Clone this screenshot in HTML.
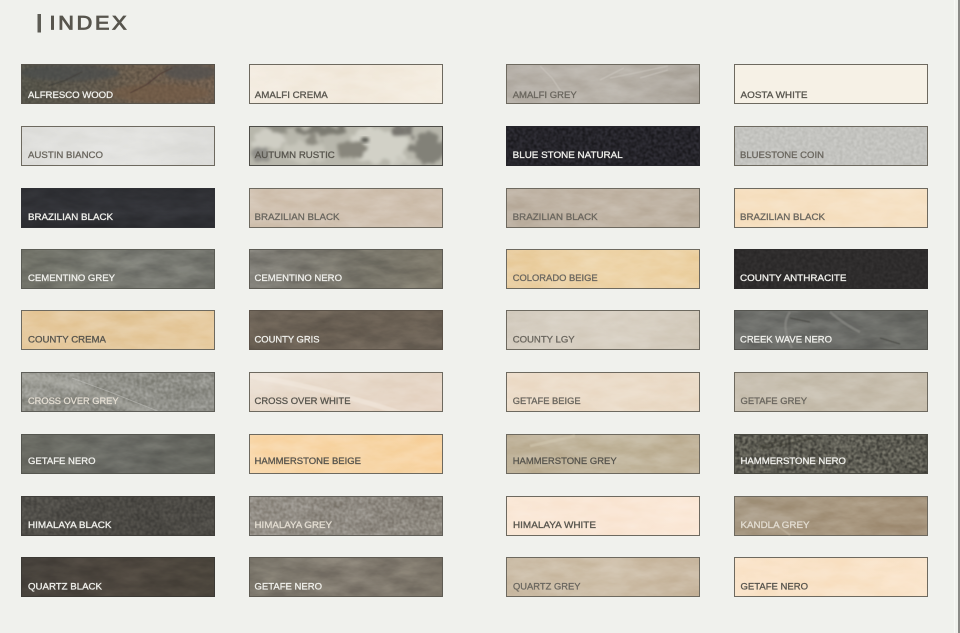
<!DOCTYPE html>
<html lang="en">
<head>
<meta charset="utf-8">
<title>Index</title>
<style>
html,body{margin:0;padding:0;width:960px;height:633px;overflow:hidden;background:#f0f1ed}
#p{position:relative;width:960px;height:633px;overflow:hidden;background:#f0f1ed}
.s{position:absolute;width:194px;height:40px;box-sizing:border-box;border:1px solid #6d695f}
.d{border-color:#4d4c47}
.c1{left:21px}.c2{left:249px}.c3{left:506px}.c4{left:734px}
.r1{top:64px}.r2{top:126px}.r3{top:188px}.r4{top:249px}.r5{top:310px}.r6{top:372px}.r7{top:434px}.r8{top:496px}.r9{top:557px}
svg{position:absolute;left:0;top:0}
.ov{mix-blend-mode:overlay}
text{font-family:"Liberation Sans",Arial,sans-serif;font-size:9.6px;stroke-width:.3px}
.k{fill:#58554e;stroke:#58554e}.g{fill:#6b675f;stroke:#6b675f}.w{fill:#f0f0ec;stroke:#f0f0ec}.m{fill:#e2dcd1;stroke:#e2dcd1}
#edge1{position:absolute;left:954px;top:0;width:1px;height:633px;background:#f7f8f5}
#edge2{position:absolute;left:958px;top:0;width:2px;height:633px;background:#8a8a87}
</style>
</head>
<body>
<div id="p">
<div class="s c1 r1 d" style="background:linear-gradient(90deg,#545349 0%,#5d574c 30%,#6a5c4c 60%,#6c5c4d 85%,#705f4f 100%);border-color:#57534b"></div>
<div class="s c2 r1" style="background:linear-gradient(100deg,#f4ede2,#f1e8da 50%,#f5eee2)"></div>
<div class="s c3 r1" style="background:linear-gradient(100deg,#b5afa7,#b9b3aa 50%,#aea89f)"></div>
<div class="s c4 r1" style="background:#f6f1e6"></div>

<div class="s c1 r2" style="background:linear-gradient(100deg,#dededb,#e3e3e0 60%,#dbdbd8)"></div>
<div class="s c2 r2 d" style="background:#b8b7ac"></div>
<div class="s c3 r2 d" style="background:#25242a;border-color:#25242a"></div>
<div class="s c4 r2" style="background:#c4c4c0"></div>

<div class="s c1 r3 d" style="background:linear-gradient(180deg,#2c2d31,#34353a 60%,#2a2b2f);border-color:#2f3034"></div>
<div class="s c2 r3" style="background:linear-gradient(90deg,#d2c3b2,#cfc0af)"></div>
<div class="s c3 r3" style="background:linear-gradient(90deg,#bdb1a2,#c3b7a8 55%,#bbaf9f)"></div>
<div class="s c4 r3" style="background:linear-gradient(90deg,#f6dfbf,#f6e2c6)"></div>

<div class="s c1 r4 d" style="background:linear-gradient(90deg,#727369,#7a7b74 60%,#72736c);border-color:#5b5c55"></div>
<div class="s c2 r4 d" style="background:linear-gradient(90deg,#7f7d76,#777469 60%,#7f7a6c);border-color:#5d5b54"></div>
<div class="s c3 r4" style="background:linear-gradient(100deg,#e9cd9f,#eed5aa 50%,#ecd1a3)"></div>
<div class="s c4 r4 d" style="background:#2e2c2c;border-color:#2e2c2c"></div>

<div class="s c1 r5" style="background:linear-gradient(110deg,#e7cba0,#e4c89c 50%,#e8cda3)"></div>
<div class="s c2 r5 d" style="background:linear-gradient(170deg,#6e6458,#685e52 50%,#71675b);border-color:#5b5248"></div>
<div class="s c3 r5" style="background:linear-gradient(115deg,#d3cbbe,#d9d1c4 50%,#d2c9ba)"></div>
<div class="s c4 r5 d" style="background:linear-gradient(90deg,#6f706c,#6b6c68 50%,#696a65);border-color:#54544f"></div>

<div class="s c1 r6 d" style="background:linear-gradient(165deg,#a0a099 0%,#8f8f88 45%,#90908a 100%);border-color:#5e5e58"></div>
<div class="s c2 r6" style="background:linear-gradient(165deg,#efe5da,#e6d7c7 50%,#e6d4c4)"></div>
<div class="s c3 r6" style="background:linear-gradient(110deg,#edddca,#ebdcc9 60%,#eadac6)"></div>
<div class="s c4 r6" style="background:linear-gradient(110deg,#c9c1b2,#c7beae 60%,#c9c0b0)"></div>

<div class="s c1 r7 d" style="background:linear-gradient(100deg,#6a6b63,#6b6c66 50%,#65665f);border-color:#55564f"></div>
<div class="s c2 r7" style="background:linear-gradient(100deg,#f9d8ab,#f7d5a5 60%,#f8d4a3)"></div>
<div class="s c3 r7" style="background:linear-gradient(100deg,#bfb299,#c2b69d 60%,#bfb197)"></div>
<div class="s c4 r7 d" style="background:linear-gradient(100deg,#5a5950,#5d5c53 60%,#5a5950);border-color:#4a4a42"></div>

<div class="s c1 r8 d" style="background:linear-gradient(90deg,#504e49,#4a4843 60%,#4c4a45);border-color:#403e3a"></div>
<div class="s c2 r8 d" style="background:linear-gradient(90deg,#948f87,#8f8a82 60%,#89847b);border-color:#62605a"></div>
<div class="s c3 r8" style="background:linear-gradient(100deg,#fae8d7,#fae6d4 60%,#fbe9d8)"></div>
<div class="s c4 r8" style="background:linear-gradient(100deg,#a89a85,#a8977f 60%,#a4927a)"></div>

<div class="s c1 r9 d" style="background:linear-gradient(90deg,#46413b,#4d463e 50%,#4b453c);border-color:#3c3a35"></div>
<div class="s c2 r9 d" style="background:linear-gradient(110deg,#7b766b,#827b70 50%,#7b7468);border-color:#5e5b53"></div>
<div class="s c3 r9" style="background:linear-gradient(110deg,#cbbca6,#cfc0aa 50%,#c9b8a1)"></div>
<div class="s c4 r9" style="background:linear-gradient(110deg,#fae4ca,#f9e2c6 50%,#fae5cc)"></div>

<svg width="960" height="633" viewBox="0 0 960 633" class="ov" xmlns="http://www.w3.org/2000/svg">
<defs>
<filter id="n" x="0" y="0" width="100%" height="100%" color-interpolation-filters="sRGB">
<feTurbulence type="fractalNoise" baseFrequency=".035 .09" numOctaves="4" seed="7"/>
<feColorMatrix type="matrix" values="1.6 0 0 0 -.3 1.6 0 0 0 -.3 1.6 0 0 0 -.3 0 0 0 0 1"/>
<feComposite in2="SourceGraphic" operator="in"/>
</filter>
<filter id="f" x="0" y="0" width="100%" height="100%" color-interpolation-filters="sRGB">
<feTurbulence type="fractalNoise" baseFrequency=".35" numOctaves="3" seed="3"/>
<feColorMatrix type="matrix" values="2 0 0 0 -.5 2 0 0 0 -.5 2 0 0 0 -.5 0 0 0 0 1"/>
<feGaussianBlur stdDeviation=".5"/>
<feComposite in2="SourceGraphic" operator="in"/>
</filter>
</defs>
<g filter="url(#n)" opacity=".12" fill="#fff">
<rect x="250" y="65" width="192" height="38"/><rect x="507" y="65" width="192" height="38"/>
<rect x="22" y="127" width="192" height="38"/>
<rect x="22" y="189" width="192" height="38"/><rect x="250" y="189" width="192" height="38"/><rect x="507" y="189" width="192" height="38"/><rect x="735" y="189" width="192" height="38"/>
<rect x="22" y="250" width="192" height="38"/><rect x="250" y="250" width="192" height="38"/><rect x="507" y="250" width="192" height="38"/>
<rect x="22" y="311" width="192" height="38"/><rect x="250" y="311" width="192" height="38"/><rect x="507" y="311" width="192" height="38"/><rect x="735" y="311" width="192" height="38"/>
<rect x="22" y="373" width="192" height="38"/><rect x="250" y="373" width="192" height="38"/><rect x="507" y="373" width="192" height="38"/><rect x="735" y="373" width="192" height="38"/>
<rect x="22" y="435" width="192" height="38"/><rect x="250" y="435" width="192" height="38"/><rect x="507" y="435" width="192" height="38"/><rect x="735" y="435" width="192" height="38"/>
<rect x="22" y="497" width="192" height="38"/><rect x="250" y="497" width="192" height="38"/><rect x="507" y="497" width="192" height="38"/><rect x="735" y="497" width="192" height="38"/>
<rect x="22" y="558" width="192" height="38"/><rect x="250" y="558" width="192" height="38"/><rect x="507" y="558" width="192" height="38"/><rect x="735" y="558" width="192" height="38"/>
</g>
<g filter="url(#f)" opacity=".16" fill="#fff">
<rect x="22" y="65" width="192" height="38"/>
<rect x="735" y="127" width="192" height="38"/>
<rect x="735" y="250" width="192" height="38"/>
<rect x="22" y="373" width="192" height="38"/>
<rect x="22" y="497" width="192" height="38"/><rect x="250" y="497" width="192" height="38"/>
</g>
<g filter="url(#f)" opacity=".4" fill="#fff">
<rect x="507" y="127" width="192" height="38"/>
<rect x="735" y="435" width="192" height="38"/>
</g>
</svg>

<svg width="960" height="633" viewBox="0 0 960 633" xmlns="http://www.w3.org/2000/svg">
<defs>
<filter id="b1" x="-30%" y="-30%" width="160%" height="160%"><feGaussianBlur stdDeviation="1.8"/></filter>
<filter id="b2" x="-20%" y="-200%" width="140%" height="500%"><feGaussianBlur stdDeviation=".6"/></filter>
<filter id="b3" x="-20%" y="-20%" width="140%" height="140%"><feGaussianBlur stdDeviation=".25"/></filter>
<filter id="w" x="-20%" y="-40%" width="140%" height="180%">
<feTurbulence type="fractalNoise" baseFrequency=".09" numOctaves="3" seed="11" result="t"/>
<feDisplacementMap in="SourceGraphic" in2="t" scale="16" xChannelSelector="R" yChannelSelector="G"/>
<feGaussianBlur stdDeviation="1.6"/>
</filter>
<clipPath id="a"><rect x="250" y="127" width="192" height="38"/></clipPath>
<clipPath id="al"><rect x="21" y="64" width="194" height="40"/></clipPath>
<clipPath id="cg"><rect x="22" y="373" width="192" height="38"/></clipPath>
<clipPath id="cw"><rect x="250" y="373" width="192" height="38"/></clipPath>
</defs>

<g clip-path="url(#a)">
<g filter="url(#w)">
<ellipse cx="378" cy="146" rx="30" ry="18" fill="#d2d1c7"/>
<ellipse cx="268" cy="140" rx="17" ry="9" fill="#cfcec4"/>
<ellipse cx="306" cy="152" rx="22" ry="10" fill="#c6c5ba"/>
<ellipse cx="322" cy="130" rx="27" ry="6" fill="#7c7a71"/>
<ellipse cx="278" cy="129" rx="14" ry="4" fill="#8e8d83"/>
<ellipse cx="313" cy="141" rx="7" ry="5" fill="#8d8b81"/>
<ellipse cx="350" cy="150" rx="14" ry="10" fill="#88867c"/>
<ellipse cx="402" cy="131" rx="12" ry="6" fill="#787670"/>
<ellipse cx="428" cy="148" rx="17" ry="16" fill="#828178"/>
<ellipse cx="260" cy="155" rx="10" ry="7" fill="#91908a"/>
<ellipse cx="400" cy="160" rx="10" ry="4" fill="#c9c8be"/>
</g>
<ellipse cx="365" cy="140" rx="4" ry="2.5" fill="#47463f" filter="url(#b1)"/>
</g>

<g clip-path="url(#al)" fill="none">
<g filter="url(#b1)" stroke="none">
<ellipse cx="70" cy="73" rx="50" ry="8" fill="#4a4b4c" opacity=".7"/>
<ellipse cx="190" cy="72" rx="26" ry="8" fill="#54534f" opacity=".8"/>
<ellipse cx="160" cy="93" rx="50" ry="9" fill="#755c45" opacity=".6"/>
</g>
<g filter="url(#b2)" stroke="#3c3a35" stroke-width="1">
<path d="M62 82 L82 72 M48 86 L66 80" opacity=".7"/>
<path d="M130 93 L146 85 L160 74 L172 68" stroke="#4c3a33" stroke-width="1.2" opacity=".8"/>
</g>
</g>

<g clip-path="url(#cg)" fill="none" filter="url(#b3)">
<path d="M22 376 Q60 380 90 392 T150 413" stroke="#b5b5ae" stroke-width="6" opacity=".5" filter="url(#b1)"/>
<path d="M72 378 L110 392 L160 412" stroke="#bdbdb7" stroke-width="1" opacity=".6"/>
<path d="M22 400 Q80 395 120 411" stroke="#6f6f69" stroke-width="2.5" opacity=".4"/>
</g>
<g clip-path="url(#cw)" fill="none" filter="url(#b2)">
<path d="M250 376 Q300 384 340 395 T400 413" stroke="#f3ebe2" stroke-width="5" opacity=".5"/>
</g>

<g fill="none" filter="url(#b2)">
<path d="M540 66 L552 78 L564 96 M600 80 L624 68 M610 78 L640 72 L668 66 M640 78 L668 70" stroke="#cdc8c0" stroke-width="1" opacity=".8"/>
<path d="M790 312 Q780 325 792 348 M830 312 Q845 325 860 332" stroke="#90908a" stroke-width="2.5" opacity=".6"/>
<path d="M790 318 L810 322 M880 338 L900 344" stroke="#4a4a45" stroke-width="1"/>
<path d="M760 446 L800 436 M762 449 L815 438" stroke="#3e3c32" stroke-width="1.5" opacity=".6"/>
<path d="M530 446 L575 436" stroke="#d6cbb6" stroke-width="3" opacity=".5"/>
<path d="M776 525 L790 535" stroke="#c4b7a3" stroke-width="1.5" opacity=".6"/>
</g>

<g filter="url(#b3)">
<rect x="37.5" y="14" width="3.5" height="18.5" fill="#5d5c55"/>
<text transform="translate(49.5,29.6) scale(1.14,1)" letter-spacing="2.4" style="font-size:19px;stroke-width:.85px" class="k">INDEX</text>

<text x="28" y="98.2" textLength="85" lengthAdjust="spacingAndGlyphs" class="w">ALFRESCO WOOD</text>
<text x="254.8" y="98.2" textLength="73" lengthAdjust="spacingAndGlyphs" class="k">AMALFI CREMA</text>
<text x="512.7" y="98.2" textLength="64" lengthAdjust="spacingAndGlyphs" class="g">AMALFI GREY</text>
<text x="740.5" y="98.2" textLength="67" lengthAdjust="spacingAndGlyphs" class="k">AOSTA WHITE</text>

<text x="28" y="158.2" textLength="75" lengthAdjust="spacingAndGlyphs" class="g">AUSTIN BIANCO</text>
<text x="254.8" y="158.2" textLength="80" lengthAdjust="spacingAndGlyphs" class="k">AUTUMN RUSTIC</text>
<text x="512.7" y="158.2" textLength="110" lengthAdjust="spacingAndGlyphs" class="w">BLUE STONE NATURAL</text>
<text x="740" y="158.2" textLength="84" lengthAdjust="spacingAndGlyphs" class="g">BLUESTONE COIN</text>

<text x="28" y="220.2" textLength="85" lengthAdjust="spacingAndGlyphs" class="w">BRAZILIAN BLACK</text>
<text x="254.5" y="220.2" textLength="85" lengthAdjust="spacingAndGlyphs" class="g">BRAZILIAN BLACK</text>
<text x="512.7" y="220.2" textLength="85" lengthAdjust="spacingAndGlyphs" class="g">BRAZILIAN BLACK</text>
<text x="740" y="220.2" textLength="85" lengthAdjust="spacingAndGlyphs" class="g">BRAZILIAN BLACK</text>

<text x="28" y="280.8" textLength="87" lengthAdjust="spacingAndGlyphs" class="w">CEMENTINO GREY</text>
<text x="254.5" y="280.8" textLength="87.5" lengthAdjust="spacingAndGlyphs" class="w">CEMENTINO NERO</text>
<text x="512.7" y="280.8" textLength="85" lengthAdjust="spacingAndGlyphs" class="g">COLORADO BEIGE</text>
<text x="740" y="280.8" textLength="106.5" lengthAdjust="spacingAndGlyphs" class="w">COUNTY ANTHRACITE</text>

<text x="28" y="342.5" textLength="78" lengthAdjust="spacingAndGlyphs" class="k">COUNTY CREMA</text>
<text x="254.5" y="342.5" textLength="65" lengthAdjust="spacingAndGlyphs" class="w">COUNTY GRIS</text>
<text x="512.7" y="342.5" textLength="62" lengthAdjust="spacingAndGlyphs" class="g">COUNTY LGY</text>
<text x="740" y="342.5" textLength="92" lengthAdjust="spacingAndGlyphs" class="w">CREEK WAVE NERO</text>

<text x="28" y="403.8" textLength="90.5" lengthAdjust="spacingAndGlyphs" class="m">CROSS OVER GREY</text>
<text x="254.5" y="403.8" textLength="96" lengthAdjust="spacingAndGlyphs" class="k">CROSS OVER WHITE</text>
<text x="512.7" y="403.8" textLength="68" lengthAdjust="spacingAndGlyphs" class="g">GETAFE BEIGE</text>
<text x="740.5" y="403.8" textLength="66.5" lengthAdjust="spacingAndGlyphs" class="g">GETAFE GREY</text>

<text x="28" y="464.2" textLength="67.5" lengthAdjust="spacingAndGlyphs" class="w">GETAFE NERO</text>
<text x="254.5" y="464.2" textLength="106.5" lengthAdjust="spacingAndGlyphs" class="k">HAMMERSTONE BEIGE</text>
<text x="512.7" y="464.2" textLength="104" lengthAdjust="spacingAndGlyphs" class="k">HAMMERSTONE GREY</text>
<text x="740.5" y="464.2" textLength="105.5" lengthAdjust="spacingAndGlyphs" class="w">HAMMERSTONE NERO</text>

<text x="28" y="528" textLength="83.5" lengthAdjust="spacingAndGlyphs" class="w">HIMALAYA BLACK</text>
<text x="254.5" y="528" textLength="77.5" lengthAdjust="spacingAndGlyphs" class="m">HIMALAYA GREY</text>
<text x="513" y="528" textLength="83" lengthAdjust="spacingAndGlyphs" class="k">HIMALAYA WHITE</text>
<text x="740.5" y="528" textLength="69" lengthAdjust="spacingAndGlyphs" class="m">KANDLA GREY</text>

<text x="28" y="589.7" textLength="74" lengthAdjust="spacingAndGlyphs" class="w">QUARTZ BLACK</text>
<text x="254.5" y="589.7" textLength="67.5" lengthAdjust="spacingAndGlyphs" class="w">GETAFE NERO</text>
<text x="513" y="589.7" textLength="67.5" lengthAdjust="spacingAndGlyphs" class="g">QUARTZ GREY</text>
<text x="740.5" y="589.7" textLength="67.5" lengthAdjust="spacingAndGlyphs" class="k">GETAFE NERO</text>
</g>
</svg>
<div id="edge1"></div>
<div id="edge2"></div>
</div>
</body>
</html>
